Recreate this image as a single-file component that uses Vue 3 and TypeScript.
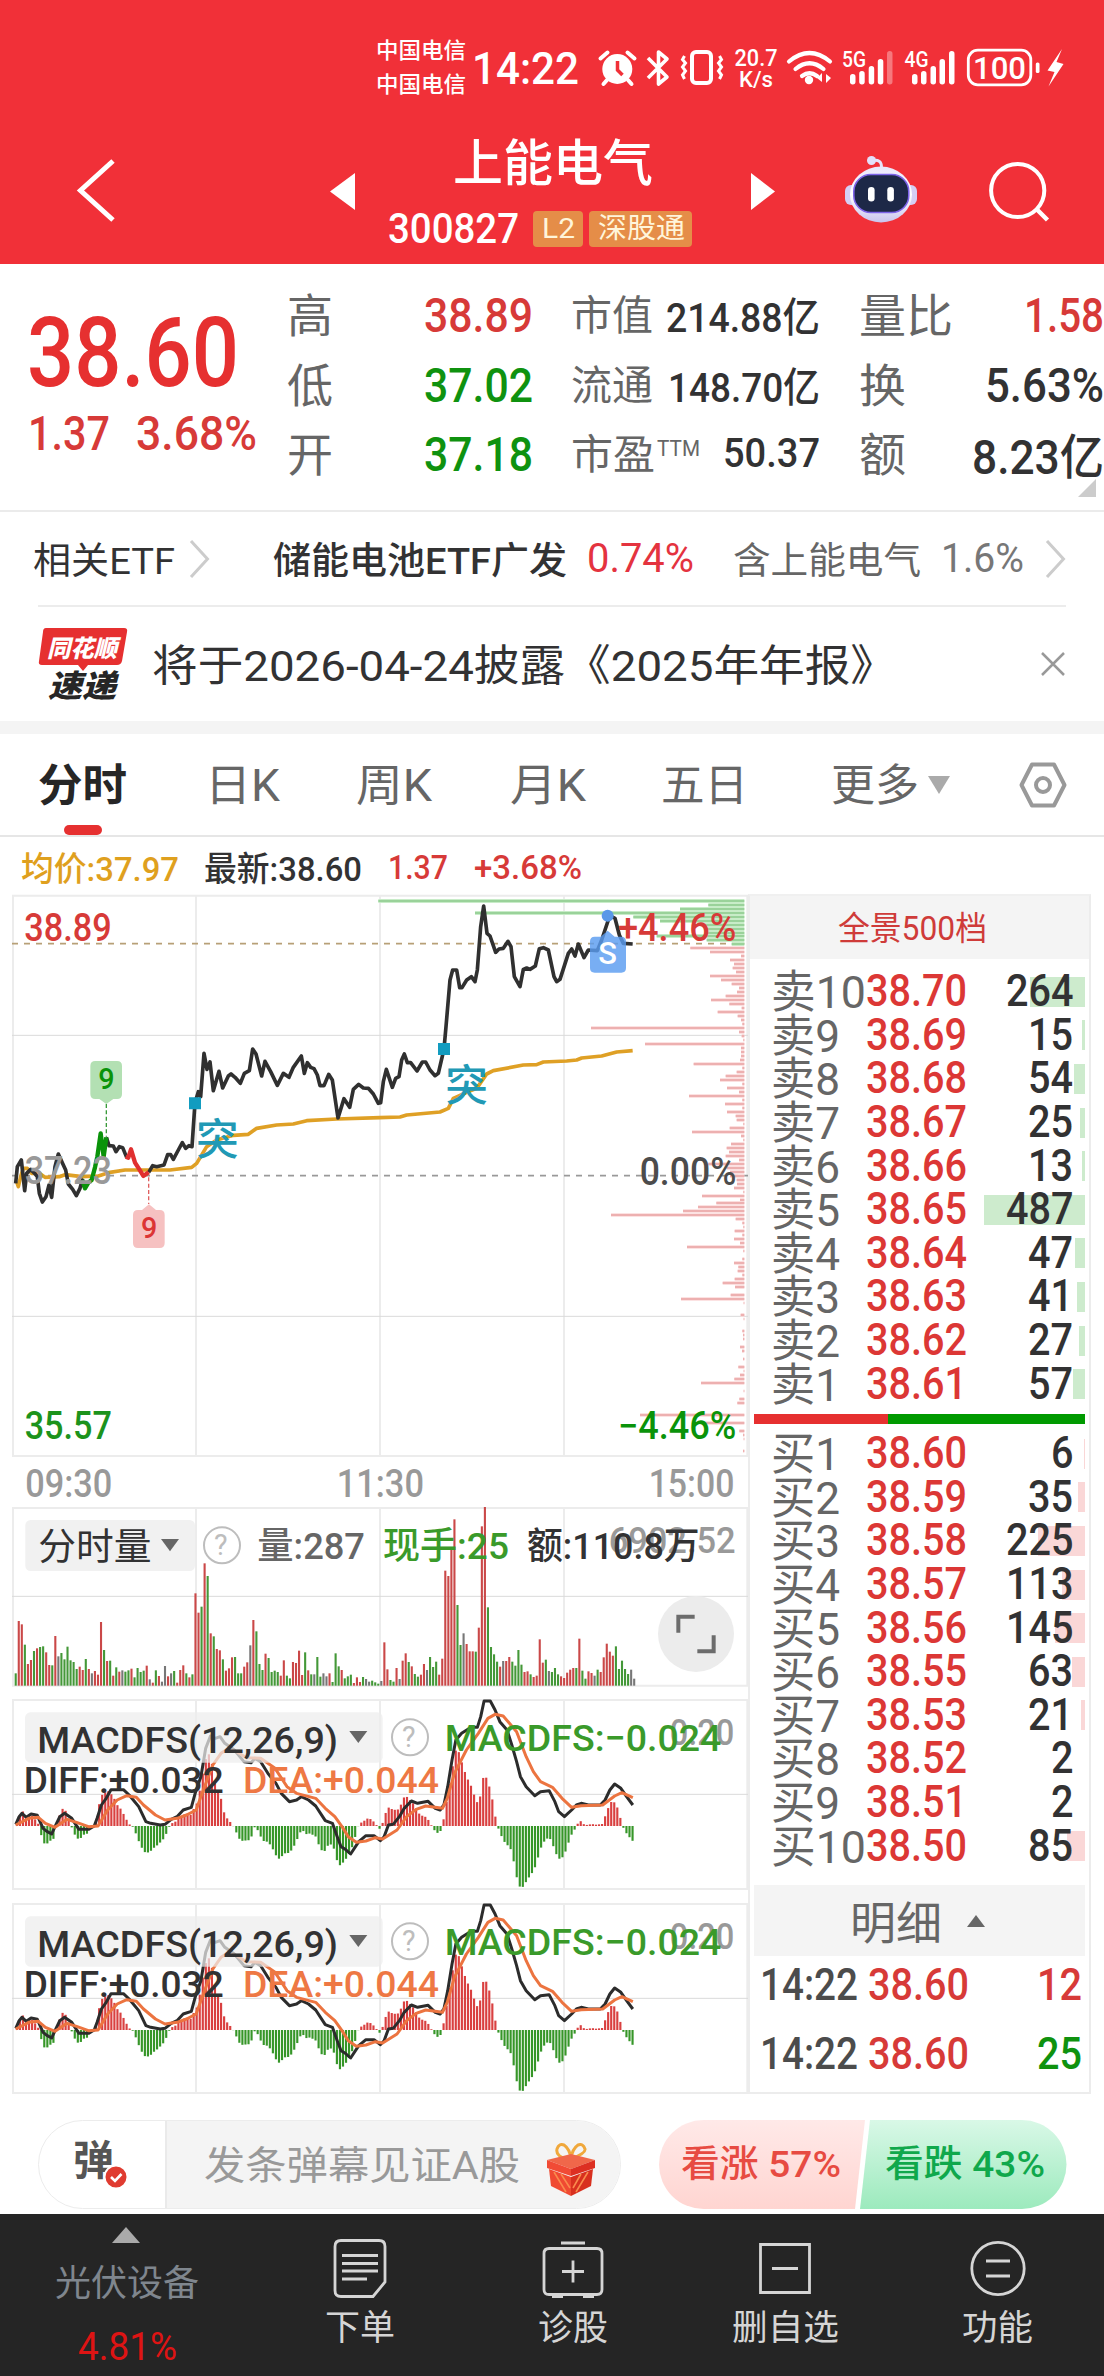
<script setup lang="ts">
interface Bar { x: number; h: number; c: string }

/* Squeezes or stretches a line of text to the given advance width. */
const vFit = {
  mounted(el: HTMLElement, binding: { value: number }) {
    const natural = el.getBoundingClientRect().width
    if (!natural) return
    el.style.transform = `scaleX(${binding.value / natural})`
    el.style.marginRight = `${binding.value - natural}px`
  },
}

const columnA = [
  { k: '高', v: '38.89', c: 'red' },
  { k: '低', v: '37.02', c: 'green' },
  { k: '开', v: '37.18', c: 'green' },
]
const columnB = [
  { k: '市值', kw: 82, sup: '', v: '214.88亿', w: 154 },
  { k: '流通', kw: 82, sup: '', v: '148.70亿', w: 152 },
  { k: '市盈', kw: 84, sup: 'TTM', v: '50.37', w: 97 },
]
const columnC = [
  { k: '量比', kw: 94, v: '1.58', w: 80, c: 'red' },
  { k: '换', kw: 47, v: '5.63%', w: 119, c: 'dark' },
  { k: '额', kw: 47, v: '8.23亿', w: 132, c: 'dark' },
]
const tabs = [
  { t: '日K', w: 75, x: 78 },
  { t: '周K', w: 76, x: 76 },
  { t: '月K', w: 76, x: 78 },
  { t: '五日', w: 87, x: 75 },
  { t: '更多', w: 88, x: 83 },
]

const sells = [264, 15, 54, 25, 13, 487, 47, 41, 27, 57].map((q, i) => ({
  n: `卖${10 - i}`, p: (38.7 - i * 0.01).toFixed(2), q, wide: i === 0,
}))
const buyPrices = ['38.60', '38.59', '38.58', '38.57', '38.56', '38.55', '38.53', '38.52', '38.51', '38.50']
const buys = [6, 35, 225, 113, 145, 63, 21, 2, 2, 85].map((q, i) => ({
  n: `买${i + 1}`, p: buyPrices[i], q, wide: i === 9,
}))
const depthWidth = (q: number) => (q < 4 ? 0 : q * 0.2074)
const qtyWidth = (q: number) => String(q).length * 22.5

/* Chart drawings use three units per pixel. */
const priceA = '47,910 52,860 64,840 74,932 80,880 92,868 104,880 112,890 118,940 127,966 138,950 147,915 155,952 165,860 175,822 190,855 197,870 205,912 218,928 229,947 240,925 247,900 255,925'
const priceGreen = '247,900 255,925 265,908 275,900 285,862 292,830 302,760 311,830 319,772'
const priceB = '319,772 327,797 340,798 348,815 358,800 368,803 380,832'
const priceRed = '377,830 385,833 393,808 405,848 418,868 430,888 446,877'
const priceC = '446,877 458,857 470,860 492,855 503,824 512,824 520,838 535,810 547,788 557,805 567,797 576,800 585,668 595,635 602,650 612,520 621,568 630,546 640,632 657,574 668,624 685,588 693,582 705,592 721,610 733,580 748,572 758,507 768,522 785,588 795,544 812,575 832,616 850,580 867,592 880,562 904,528 913,580 922,548 932,562 942,566 952,585 960,617 972,617 986,583 997,600 1014,714 1032,656 1049,682 1060,628 1076,613 1090,624 1105,625 1120,642 1135,670 1142,668 1150,605 1159,568 1177,622 1187,595 1197,590 1205,540 1213,522 1222,548 1232,548 1251,573 1267,546 1277,546 1290,570 1305,587 1315,580 1332,507 1338,440 1350,300 1358,270 1370,270 1379,323 1386,323 1400,300 1414,290 1425,305 1432,270 1442,140 1451,78 1461,160 1470,168 1487,217 1497,207 1510,205 1524,184 1533,200 1543,290 1560,320 1570,268 1580,264 1590,268 1606,258 1618,206 1630,203 1645,210 1662,290 1670,305 1680,298 1705,220 1715,207 1725,228 1735,192 1752,233 1765,210 1792,212 1805,180 1825,120 1835,110 1845,115 1858,165 1870,190 1898,192'
const average = '50,905 55,920 62,890 70,865 82,865 95,880 118,880 135,892 178,890 195,884 245,890 295,888 330,877 375,870 510,870 575,862 590,850 620,800 650,780 700,766 745,763 770,745 830,735 880,732 920,722 1010,717 1140,713 1200,711 1220,705 1320,696 1345,685 1360,655 1405,635 1430,625 1460,582 1480,572 1570,555 1610,554 1630,546 1700,543 1730,540 1745,534 1805,528 1850,516 1898,512'

const parsePairs = (s: string) => s.split(' ').map(p => p.split(':').map(Number))
const chipsGreen = parsePairs('63:55 75:1045 87:960 99:345 111:820 123:900 135:1035 147:1035 159:1035 168:890 180:1040 192:1115')
const chipsRed = parsePairs('204:991 216:1050 228:1143 240:1110 252:1122 264:1118 276:1128 288:1050 300:1083 312:1115 324:1137 336:1131 348:1097 360:1053 372:1108 384:1145 396:1073 408:1133 420:1143 432:1147 444:693 456:1137 468:1145 480:1150 492:855 504:1143 516:1143 528:1143 540:1140 552:1001 564:1147 576:1130 588:1097 600:1080 612:1147 624:1101 636:1137 648:987 660:1147 672:1095 684:1147 696:1101 708:1127 720:1130 732:1150 744:1109 756:996 768:1143 780:1150 792:1113 804:1100 816:1107 828:1097 840:1137 852:1045 864:1100 876:1110 888:1110 900:1130 912:1131 924:1122 936:1150 948:1026 960:1140 969:1069 981:1014 993:969 1005:753 1017:1127 1029:1147 1041:1150 1053:1124 1065:1147 1077:1122 1089:1140 1101:981 1113:1150 1137:1147 1149:1122 1161:1135 1173:1133 1185:1147 1197:1124 1209:1088 1221:1125 1245:1112 1257:963 1269:1151 1305:1142 1317:1151 1353:1147 1365:1149 1377:1149 1401:1140 1413:1146 1437:1149 1461:1135 1473:1151 1485:1140 1497:1123 1509:1023 1533:1151 1557:1138 1569:1132 1605:840 1629:1030 1653:1138 1665:1149 1677:1151 1713:1149')

const volumeRaw = 'g1210 r1053 r1063 g1124 r1182 r1170 g1143 r1135 g1131 g1129 r1147 r1185 g1186 r1098 k1159 g1149 g1168 g1130 g1171 g1176 g1197 r1190 r1200 g1167 r1197 k1210 r1203 r1214 r1056 g1140 r1173 g1172 r1217 g1192 r1205 k1201 g1205 g1201 r1196 g1222 g1194 g1206 g1202 r1187 k1228 r1238 g1201 r1218 k1235 k1188 r1219 k1210 g1203 r1238 r1200 r1186 g1210 r1222 g1213 r970 r1028 g1010 r880 g918 r1090 g1099 r1137 r1141 g1168 r1202 r1195 r1162 g1161 g1210 g1210 r1190 r1177 k1126 r1050 g1084 g1182 g1200 r1151 g1164 g1206 g1202 g1206 r1217 r1171 g1217 g1225 r1176 r1179 r1142 r1215 g1147 r1201 g1213 k1213 g1161 g1220 k1210 k1219 r1210 g1236 g1150 g1189 r1200 g1225 g1219 g1214 r1239 r1222 r1236 g1221 k1227 k1235 g1232 g1237 g1241 k1233 r1117 r1198 g1230 g1235 r1194 k1227 r1172 r1150 g1176 r1189 g1212 g1220 r1214 r1182 k1200 g1161 g1191 g1175 r1214 r1166 r902 r918 r840 r748 g1005 g1125 k1090 r1122 r1144 r1144 g1145 r1073 r769 r711 g1012 g1131 g1153 g1175 r1190 k1173 r1173 r1161 g1175 g1187 g1140 g1184 r1206 r1204 g1213 r1221 r1217 r1108 r1178 g1169 k1203 g1206 g1194 g1213 r1219 r1224 r1208 r1199 r1194 g1194 r1106 g1202 g1226 r1204 r1209 k1217 g1199 r1206 r1162 r1121 r1145 r1157 g1129 g1197 g1172 g1197 g1212 k1199 k1226'
const volume: Bar[] = volumeRaw.split(' ').map((s, i) => ({ x: 44 + i * 9.14, h: 1247 - Number(s.slice(1)), c: s[0] }))

const histogram = parsePairs('35:8 45:50 52:30 60:32 68:30 75:15 80:5 84:-20 90:-50 96:-57 103:-42 109:-50 115:-15 121:20 128:50 134:54 141:30 147:5 153:-20 160:-36 166:-42 172:-26 180:-26 186:-10 194:-3 200:15 210:92 216:95 223:108 230:98 236:90 243:65 250:55 256:40 262:25 268:5 274:4 280:-10 287:-38 294:-60 300:-78 312:-80 318:-68 325:-62 332:-52 338:-45 345:-30 351:-8 357:8 364:10 370:20 377:25 384:35 392:38 400:32 406:60 412:70 420:130 427:190 433:215 439:215 446:155 452:95 458:110 464:60 470:30 477:18 483:8 489:-5 495:-25 502:-45 524:-42 528:-5 534:-3 541:-20 548:-45 555:-45 562:-52 568:-65 575:-85 580:-98 586:-98 592:-82 600:-82 606:-78 612:-65 618:-50 625:-22 632:-12 638:-25 645:-22 652:-26 658:-28 664:-50 670:-72 678:-75 685:-58 692:-55 698:-70 704:-105 712:-122 718:-105 725:-95 732:-75 738:-55 744:-20 750:8 758:12 764:20 770:24 777:18 784:8 790:-5 796:-12 800:15 808:50 814:58 820:48 834:50 840:75 846:92 852:85 858:75 865:65 872:45 878:32 885:30 892:25 898:10 904:-5 910:-18 916:-22 922:-12 928:30 935:90 941:140 947:190 954:240 960:215 967:180 974:150 980:132 987:112 992:85 999:65 1005:100 1011:160 1018:138 1025:105 1031:62 1037:10 1043:-15 1050:-38 1057:-55 1063:-60 1069:-75 1075:-120 1081:-165 1088:-189 1094:-180 1100:-165 1107:-150 1113:-138 1119:-120 1126:-85 1132:-58 1139:-42 1146:-35 1152:-42 1158:-70 1164:-90 1171:-102 1177:-90 1183:-72 1190:-40 1196:-20 1202:-8 1208:10 1214:15 1220:5 1227:3 1236:6 1245:4 1252:5 1258:6 1264:28 1271:55 1277:72 1283:72 1290:55 1296:25 1302:-4 1309:-22 1316:-35 1322:-45')
function heightAt(x: number): number {
  for (let i = 1; i < histogram.length; i++) {
    const [x0, y0] = histogram[i - 1]
    const [x1, y1] = histogram[i]
    if (x <= x1) return y0 + ((y1 - y0) * Math.max(0, x - x0)) / (x1 - x0)
  }
  return histogram[histogram.length - 1][1]
}
const macdBars = Array.from({ length: 203 }, (_, i) => {
  const x = 33 + i * 6.372
  return { x, h: heightAt(x + 1.5) }
})
const diff = '33,403 40,380 46,370 55,382 65,372 78,376 90,415 98,424 108,432 115,410 125,380 135,370 150,385 165,418 185,418 197,408 203,385 212,345 222,325 232,299 258,299 270,315 290,350 305,395 315,400 335,405 345,403 358,388 370,380 383,360 400,352 408,310 420,260 430,175 440,138 450,145 460,140 470,160 490,180 510,215 525,218 533,205 545,215 560,250 577,280 588,310 605,335 620,330 630,320 645,330 660,348 680,392 695,400 705,440 713,470 722,478 733,492 750,455 765,437 782,437 795,452 803,440 812,405 822,403 835,380 845,355 860,333 873,340 895,334 910,355 920,360 928,345 936,290 945,210 953,150 965,130 985,112 998,112 1005,80 1012,33 1025,33 1035,60 1045,95 1060,120 1070,165 1080,215 1088,260 1100,290 1118,317 1130,305 1148,302 1160,335 1168,365 1180,380 1195,360 1205,345 1215,340 1230,345 1255,345 1265,330 1275,300 1285,282 1298,295 1310,320 1323,345'
const dea = '33,405 60,385 80,382 95,400 115,412 140,388 160,397 185,410 205,408 225,360 245,330 265,317 285,322 300,345 325,375 345,390 370,385 390,375 410,360 425,300 445,225 462,190 475,178 495,185 515,203 545,205 575,235 600,290 620,310 660,325 680,355 700,380 715,410 728,440 745,457 765,453 785,443 800,447 830,420 850,380 870,358 890,348 925,355 935,325 950,250 975,180 1000,130 1020,85 1035,73 1052,78 1080,125 1100,200 1115,245 1130,275 1155,292 1175,325 1195,352 1215,347 1260,345 1285,318 1300,308 1323,323'
</script>

<template>
  <div class="screen">
    <header class="top">
      <div class="status">
        <div class="carriers"><span v-fit="90">中国电信</span><span v-fit="90">中国电信</span></div>
        <span v-fit="107" class="clock">14:22</span>
        <svg class="sys" width="480" height="60" viewBox="590 38 480 60" fill="none">
          <g fill="#fff" stroke="#fff">
            <ellipse cx="616.3" cy="69" rx="15" ry="15" stroke="none" />
            <path d="M599.500 58.500l7-6M633.500 58.500l-7-6M606 80l-3.500 4M627 80l3.500 4" stroke-width="4" stroke-linecap="round" />
            <path d="M616.500 61v9l5 5" fill="none" stroke="#f13038" stroke-width="3.500" />
          </g>
          <path d="M647 58l19 19-8.500 7V52l8.500 7-19 19" stroke="#fff" stroke-width="3.600" stroke-linejoin="round" />
          <rect x="691" y="52" width="19" height="31" rx="4" stroke="#fff" stroke-width="4" />
          <path d="M683.500 56l-2 3.500 3 3.500-3 4 3 4-3 4 2 4M718.500 56l2 3.500-3 3.500 3 4-3 4 3 4-2 4" stroke="#fff" stroke-width="3" />
          <g class="num" fill="#fff">
            <text x="733.500" y="66" font-size="23" textLength="43" lengthAdjust="spacingAndGlyphs">20.7</text>
            <text x="738" y="87" font-size="22.500" textLength="34" lengthAdjust="spacingAndGlyphs">K/s</text>
            <text x="841" y="66.500" font-size="22" textLength="24" lengthAdjust="spacingAndGlyphs">5G</text>
            <text x="903.500" y="66.500" font-size="22" textLength="24" lengthAdjust="spacingAndGlyphs">4G</text>
            <text x="972" y="79" font-size="31.500" textLength="53" lengthAdjust="spacingAndGlyphs">100</text>
          </g>
          <g stroke="#fff" stroke-width="4.200" stroke-linecap="round">
            <path d="M788 61.500q20.500-17 41 0M794.500 69q14-11.500 28 0M801 76q7.500-5.500 15 0" />
          </g>
          <circle cx="808" cy="80" r="4.200" fill="#fff" />
          <path d="M821 73v9l-5-4M825 83v-9l5 4" fill="#fff" />
          <g fill="#fff">
            <rect x="849" y="74" width="5.500" height="10.500" rx="2.700" /><rect x="858.200" y="71" width="5.500" height="13.500" rx="2.700" /><rect x="867.700" y="66" width="5.500" height="18.500" rx="2.700" /><rect x="876.800" y="59" width="5.500" height="25.500" rx="2.700" /><rect x="886" y="51" width="5.500" height="33.500" rx="2.700" opacity=".35" />
            <rect x="911" y="74" width="5.500" height="10.500" rx="2.700" /><rect x="920" y="71" width="5.500" height="13.500" rx="2.700" /><rect x="929.500" y="66" width="5.500" height="18.500" rx="2.700" /><rect x="938.500" y="59" width="5.500" height="25.500" rx="2.700" /><rect x="948" y="51" width="5.500" height="33.500" rx="2.700" />
            <rect x="1034.800" y="62.500" width="3.700" height="10.500" rx="1.600" />
            <path d="M1061 49l-14.500 21.500 7 1.500-6 14.500L1062.500 64l-7-2z" />
          </g>
          <rect x="967.300" y="50.200" width="62.500" height="34.600" rx="9.500" stroke="#fff" stroke-width="2.800" />
        </svg>
      </div>
      <div class="title">
        <svg class="back" width="44" height="70" viewBox="0 0 44 70"><path d="M39 6L6.500 35.500 39 65" fill="none" stroke="#fff" stroke-width="5" /></svg>
        <svg class="prev" width="26" height="38" viewBox="0 0 26 38"><path d="M25 0v37L0 18.500z" fill="#fff" /></svg>
        <div class="name">
          <span v-fit="200" class="stock">上能电气</span>
          <div class="code">
            <span v-fit="131" class="ticker">300827</span>
            <b class="tag l2"><span v-fit="33">L2</span></b>
            <b class="tag sz"><span v-fit="87">深股通</span></b>
          </div>
        </div>
        <svg class="next" width="26" height="38" viewBox="0 0 26 38"><path d="M1 0v37l24-18.500z" fill="#fff" /></svg>
        <svg class="robot" width="76" height="70" viewBox="842 154 76 70">
          <defs>
            <linearGradient id="shell" x1="0" y1="0" x2="0" y2="1"><stop offset="0" stop-color="#e9e6fb" /><stop offset=".5" stop-color="#fff" /><stop offset="1" stop-color="#c9c4ee" /></linearGradient>
          </defs>
          <path d="M870 161q11-3 10.500 7" fill="none" stroke="#e6e2fa" stroke-width="3" />
          <circle cx="870.500" cy="160.500" r="4.500" fill="#e3dffa" />
          <rect x="844" y="185" width="72" height="20" rx="6" fill="#d5cff5" />
          <ellipse cx="880" cy="194.500" rx="31" ry="28" fill="url(#shell)" />
          <rect x="852.800" y="174.500" width="55" height="38" rx="17" fill="#1d2847" stroke="#7d63e8" stroke-width="1.600" />
          <rect x="867" y="187" width="6.600" height="14.500" rx="3.300" fill="#fff" /><rect x="886.300" y="187" width="6.600" height="14.500" rx="3.300" fill="#fff" />
        </svg>
        <svg class="search" width="64" height="64" viewBox="986 160 64 64"><circle cx="1016.700" cy="190.500" r="26.600" fill="none" stroke="#fff" stroke-width="4" /><path d="M1035.500 209l11 11" stroke="#fff" stroke-width="4.500" /></svg>
      </div>
    </header>

    <section class="quote">
      <div class="last">
        <span v-fit="212" class="big">38.60</span>
        <div class="change"><span v-fit="82">1.37</span><span v-fit="121">3.68%</span></div>
      </div>
      <div class="col a">
        <div v-for="r in columnA" :key="r.k" class="kv"><span class="k">{{ r.k }}</span><span v-fit="109" class="v" :class="r.c">{{ r.v }}</span></div>
      </div>
      <div class="col b">
        <div v-for="r in columnB" :key="r.k" class="kv"><span class="k"><span v-fit="r.kw">{{ r.k }}</span><sup v-if="r.sup" v-fit="43">{{ r.sup }}</sup></span><span v-fit="r.w" class="v dark">{{ r.v }}</span></div>
      </div>
      <div class="col c">
        <div v-for="r in columnC" :key="r.k" class="kv"><span v-fit="r.kw" class="k">{{ r.k }}</span><span v-fit="r.w" class="v" :class="r.c">{{ r.v }}</span></div>
      </div>
      <i class="corner"></i>
    </section>

    <section class="etf">
      <span v-fit="142">相关ETF</span>
      <svg class="chev one" width="22" height="40" viewBox="0 0 22 40"><path d="M2 2l16.500 18L2 38" /></svg>
      <span v-fit="294" class="fund">储能电池ETF广发</span>
      <span v-fit="107" class="pct">0.74%</span>
      <span v-fit="188" class="grey">含上能电气</span>
      <span v-fit="83" class="grey weight">1.6%</span>
      <svg class="chev two" width="22" height="40" viewBox="0 0 22 40"><path d="M2 2l16.500 18L2 38" /></svg>
    </section>

    <section class="news">
      <svg class="logo" width="92" height="76" viewBox="38 626 92 76">
        <path d="M46 628h78q4 0 3 4l-5 29q-1 4-5 4H88l-5 6-5-6H42q-4 0-3-4l4-29q0-4 3-4z" fill="#e63030" />
        <text class="brand" x="47" y="657" font-size="24" fill="#fff" textLength="70" lengthAdjust="spacingAndGlyphs">同花顺</text>
        <text class="brand" x="48" y="697" font-size="31" fill="#262626" textLength="68" lengthAdjust="spacingAndGlyphs">速递</text>
      </svg>
      <span v-fit="744" class="headline">将于2026-04-24披露《2025年年报》</span>
      <svg class="close" width="26" height="26" viewBox="0 0 26 26"><path d="M2 2l22 22M24 2L2 24" stroke="#999" stroke-width="2.500" /></svg>
    </section>

    <nav class="tabs">
      <span class="on"><span v-fit="89">分时</span></span>
      <span v-for="t in tabs" :key="t.t" :style="{ paddingLeft: t.x + 'px' }"><span v-fit="t.w">{{ t.t }}</span></span>
      <i class="caret"></i>
      <svg class="gear" width="50" height="50" viewBox="0 0 50 50" fill="none" stroke="#999" stroke-width="4"><path d="M14 4.500h22L46.500 25 36 45.500H14L3.500 25z" stroke-linejoin="round" /><circle cx="25" cy="25" r="7" /></svg>
    </nav>

    <div class="legend">
      <span v-fit="158" class="avg">均价:37.97</span><span v-fit="158" class="now">最新:38.60</span><span v-fit="60" class="red">1.37</span><span v-fit="108" class="red">+3.68%</span>
    </div>

    <main class="market">
      <div class="charts">
        <svg width="748" height="612" viewBox="0 42 2244 1836" fill="none">
          <g stroke="#ececec" stroke-width="6">
            <path d="M39 1728V47H1828M588 47V1728M1140 47V1728M1692 47V1728M2242 47V1728M36 1728H2244M1828 47H2244" />
          </g>
          <path d="M36 466H2244M36 1309H2244" stroke="#dadada" stroke-width="3" />
          <g stroke-width="5" stroke-dasharray="18 18">
            <path d="M36 191H2233" stroke="#b7a077" /><path d="M36 887H2244" stroke="#999" />
          </g>
          <g v-for="c in chipsGreen" :key="'g' + c[0]"><path :d="`M${c[1] + 1080} ${c[0]}H2233`" stroke="#c8ecc8" stroke-width="12" /><path :d="`M${c[1] + 1080} ${c[0]}H2233`" stroke="#9ad29a" stroke-width="6" /></g>
          <g v-for="c in chipsRed" :key="'r' + c[0]"><path :d="`M${c[1] + 1080} ${c[0]}H2233`" stroke="#fbd9d9" stroke-width="11" /><path :d="`M${c[1] + 1080} ${c[0]}H2233`" stroke="#edb0b0" stroke-width="6" /></g>
          <g stroke-width="11" stroke-linejoin="round">
            <polyline :points="average" stroke="#dfa025" />
            <polyline :points="priceA" stroke="#303030" /><polyline :points="priceB" stroke="#303030" /><polyline :points="priceC" stroke="#303030" />
            <polyline :points="priceGreen" stroke="#0a930a" stroke-width="13" /><polyline :points="priceRed" stroke="#e03030" stroke-width="13" />
          </g>
          <g stroke-width="4" stroke-dasharray="12 7"><path d="M319 672V770" stroke="#3a9a3a" /><path d="M446 892V972" stroke="#e06060" /></g>
          <path d="M286 543h65q15 0 15 15v84q0 15-15 15h-11l-21 15-21-15h-12q-15 0-15-15v-84q0-15 15-15z" fill="#b3e0b3" />
          <path d="M414 1104h65q15 0 15-15v-84q0-15-15-15h-11l-21-17-21 17h-12q-15 0-15 15v84q0 15 15 15z" fill="#f6c1c1" />
          <path d="M567 652h36v36h-36zM1314 489h36v36h-36z" fill="#129cc0" />
          <g class="cjk" font-size="128" fill="#2199b5"><text x="588" y="826">突</text><text x="1336" y="664">突</text></g>
          <g class="num" font-size="114">
            <text x="295" y="628" font-size="90" fill="#0a930a" textLength="49" lengthAdjust="spacingAndGlyphs">9</text>
            <text x="423" y="1075" font-size="90" fill="#dc3535" textLength="49" lengthAdjust="spacingAndGlyphs">9</text>
            <text x="73" y="183" fill="#d73a38" textLength="262" lengthAdjust="spacingAndGlyphs">38.89</text>
            <text x="74" y="913" fill="#999" textLength="262" lengthAdjust="spacingAndGlyphs">37.23</text>
            <text x="1919" y="915" fill="#4c4c4c" textLength="290" lengthAdjust="spacingAndGlyphs">0.00%</text>
            <text x="1854" y="183" fill="#d73a38" textLength="355" lengthAdjust="spacingAndGlyphs">+4.46%</text>
            <text x="1854" y="1677" fill="#0a930a" textLength="355" lengthAdjust="spacingAndGlyphs">−4.46%</text>
            <text x="74" y="1677" fill="#1c931c" textLength="262" lengthAdjust="spacingAndGlyphs">35.57</text>
            <g fill="#999">
              <text x="76" y="1852" textLength="261" lengthAdjust="spacingAndGlyphs">09:30</text>
              <text x="1010" y="1852" textLength="262" lengthAdjust="spacingAndGlyphs">11:30</text>
              <text x="1946" y="1852" textLength="257" lengthAdjust="spacingAndGlyphs">15:00</text>
            </g>
          </g>
          <circle cx="1823" cy="107" r="18" fill="#5a98e8" />
          <path d="M1782 170h20l21-18 21 18h20q14 0 14 14v80q0 14-14 14h-80q-14 0-14-14v-80q0-14 14-14z" fill="#5a9cf0" opacity=".82" />
          <text class="num" x="1795" y="252" font-size="92" fill="#fff" textLength="56" lengthAdjust="spacingAndGlyphs">S</text>
        </svg>

        <svg class="vol" width="748" height="182" viewBox="0 708 2244 546" fill="none">
          <path d="M39 1247V714H2242V1247M588 714V1247M1140 714V1247M1692 714V1247M36 1247H2244" stroke="#ececec" stroke-width="6" />
          <path d="M36 979H2244" stroke="#dadada" stroke-width="3" />
          <rect x="76" y="750" width="509" height="153" rx="16" fill="#f1f1f1" />
          <circle cx="2088" cy="1092" r="114" fill="#ececec" />
          <path d="M2035 1088V1040H2084M2141 1096V1144H2092" stroke="#6c6c6c" stroke-width="12" />
          <rect v-for="(b, i) in volume" :key="i" :class="'v-' + b.c" :x="b.x" :y="1247 - b.h" width="6.300" :height="b.h" />
          <path d="M483 807h54l-27 37z" fill="#666" />
          <circle cx="666" cy="826" r="54" stroke="#bdbdbd" stroke-width="6" />
          <g class="num thin">
            <text x="642" y="856" font-size="86" fill="#bdbdbd">?</text>
            <text x="115" y="870" font-size="112" fill="#323233" textLength="340" lengthAdjust="spacingAndGlyphs">分时量</text>
          </g>
          <g class="num" font-size="112">
            <text x="1826" y="848" fill="#999" textLength="381" lengthAdjust="spacingAndGlyphs">6902.52</text>
            <text x="772" y="866" fill="#666" textLength="323" lengthAdjust="spacingAndGlyphs">量:287</text>
            <text x="1149" y="866" fill="#3a9a2a" textLength="378" lengthAdjust="spacingAndGlyphs">现手:25</text>
            <text x="1581" y="866" fill="#323233" textLength="518" lengthAdjust="spacingAndGlyphs">额:110.8万</text>
          </g>
        </svg>

        <svg v-for="n in 2" :key="n" class="macd" width="748" height="192" viewBox="0 27 2244 576" fill="none">
          <path d="M39 597V30H2242V597M588 30V597M1140 30V597M1692 30V597M36 597H2244" stroke="#ececec" stroke-width="6" />
          <path d="M36 313H2244" stroke="#dadada" stroke-width="3" />
          <g transform="scale(1.435 1)">
            <rect v-for="(b, i) in macdBars" :key="i" :x="b.x" :y="b.h > 0 ? 408 - b.h : 408" width="4.500" :height="Math.abs(b.h)" :fill="b.h > 0 ? '#d94040' : '#369628'" />
            <polyline class="line" :points="diff" stroke="#2c2c2c" />
            <polyline class="line" :points="dea" stroke="#ec7440" />
          </g>
          <rect x="75" y="67" width="1073" height="151" rx="16" fill="#ededed" opacity=".72" />
          <path d="M1048 123h54l-27 36z" fill="#666" />
          <circle cx="1230" cy="142" r="54" stroke="#bdbdbd" stroke-width="6" />
          <text class="num thin" x="1206" y="172" font-size="86" fill="#bdbdbd">?</text>
          <g class="num" font-size="113">
            <text x="2009" y="164" fill="#999" textLength="194" lengthAdjust="spacingAndGlyphs">0.20</text>
            <text x="112" y="188" fill="#323233" textLength="902" lengthAdjust="spacingAndGlyphs">MACDFS(12,26,9)</text>
            <text x="1334" y="183" fill="#3a9a2a" textLength="830" lengthAdjust="spacingAndGlyphs">MACDFS:−0.024</text>
            <text x="71" y="308" fill="#323233" textLength="600" lengthAdjust="spacingAndGlyphs">DIFF:+0.032</text>
            <text x="729" y="308" fill="#ee7844" textLength="588" lengthAdjust="spacingAndGlyphs">DEA:+0.044</text>
          </g>
        </svg>
      </div>

      <aside class="book">
        <div class="bookhead"><span v-fit="149">全景500档</span></div>
        <div class="levels sell">
          <div v-for="r in sells" :key="r.n" class="level">
            <span class="n"><span v-fit="r.wide ? 95 : 69">{{ r.n }}</span></span><span v-fit="101" class="p">{{ r.p }}</span>
            <span class="q"><i :style="{ width: depthWidth(r.q) + 'px' }"></i><b v-fit="qtyWidth(r.q)">{{ r.q }}</b></span>
          </div>
        </div>
        <div class="ratio"><i></i></div>
        <div class="levels buy">
          <div v-for="r in buys" :key="r.n" class="level">
            <span class="n"><span v-fit="r.wide ? 95 : 69">{{ r.n }}</span></span><span v-fit="101" class="p">{{ r.p }}</span>
            <span class="q"><i :style="{ width: depthWidth(r.q) + 'px' }"></i><b v-fit="qtyWidth(r.q)">{{ r.q }}</b></span>
          </div>
        </div>
        <div class="detail"><span v-fit="92">明细</span><i></i></div>
        <div class="trade"><span v-fit="98">14:22</span><span v-fit="101" class="red">38.60</span><span v-fit="45" class="red amt">12</span></div>
        <div class="trade"><span v-fit="98">14:22</span><span v-fit="101" class="red">38.60</span><span v-fit="45" class="green amt">25</span></div>
      </aside>
    </main>

    <section class="social">
      <div class="danmu">
        <div class="toggle"><b>弹</b><svg width="26" height="26" viewBox="0 0 26 26"><circle cx="13" cy="13" r="11.500" fill="#e03c31" stroke="#fff" stroke-width="2" /><path d="M8 13l4 4 6.500-7" fill="none" stroke="#fff" stroke-width="2.600" /></svg></div>
        <div class="input">
          <span v-fit="316">发条弹幕见证A股</span>
          <svg width="50" height="54" viewBox="0 0 50 54">
            <path d="M25 16C13 16 10 10 11 6q2-6 7-4 6 4 7 14 1-10 7-14 5-2 7 4 1 4-14 10z" fill="none" stroke="#f0a83c" stroke-width="3" />
            <path d="M1 17l24-6 24 6-24 9z" fill="#f0674a" /><path d="M1 17l24 9v7L1 25z" fill="#f14b35" /><path d="M49 17l-24 9v7l24-8z" fill="#dd2f22" />
            <path d="M3 26l22 8v19L5 43z" fill="#f04a32" /><path d="M47 26l-22 8v19l20-10z" fill="#d8301f" />
            <path d="M8 29l12 20M15 31l9 14M42 29L30 49M35 31l-8 14" stroke="#f98a4c" stroke-width="1.600" />
          </svg>
        </div>
      </div>
      <div class="poll">
        <svg width="408" height="89" viewBox="0 0 408 89">
          <defs>
            <linearGradient id="up" x1="0" y1="0" x2="0" y2="1"><stop offset="0" stop-color="#ffe9e8" /><stop offset="1" stop-color="#ffd5d1" /></linearGradient>
            <linearGradient id="down" x1="0" y1="0" x2="0" y2="1"><stop offset="0" stop-color="#d9f8e7" /><stop offset="1" stop-color="#9ceabd" /></linearGradient>
          </defs>
          <path d="M44.500 0H206l-10 89H44.500a44.500 44.500 0 0 1 0-89z" fill="url(#up)" />
          <path d="M211 0H363a44.500 44.500 0 0 1 0 89H201z" fill="url(#down)" />
          <g class="num" font-size="37"><text x="22" y="57" fill="#e74b42" textLength="160" lengthAdjust="spacingAndGlyphs">看涨 57%</text><text x="226" y="57" fill="#10a84c" textLength="160" lengthAdjust="spacingAndGlyphs">看跌 43%</text></g>
        </svg>
      </div>
    </section>

    <footer class="dock">
      <div class="sector"><i></i><span v-fit="144">光伏设备</span><b v-fit="99">4.81%</b></div>
      <div class="item">
        <svg width="66" height="62" viewBox="0 0 66 62"><path d="M14 3.500h38q6 0 6 6V45L46 59.500H14q-6 0-6-6v-44q0-6 6-6zM15 18.500h36M15 26.500h36M15 34h36M15 42h25" /></svg>
        <span v-fit="70">下单</span>
      </div>
      <div class="item">
        <svg width="66" height="62" viewBox="0 0 66 62"><path d="M9 11.500h48q5 0 5 5v36q0 5-5 5H9q-5 0-5-5v-36q0-5 5-5zM21 6h24M22 34.500h22M33 23.500v22M12 59.500h11M43 59.500h11" /></svg>
        <span v-fit="70">诊股</span>
      </div>
      <div class="item">
        <svg width="66" height="62" viewBox="0 0 66 62"><path d="M8.500 7.500h49v48h-49zM20 31.500h26" /></svg>
        <span v-fit="107">删自选</span>
      </div>
      <div class="item">
        <svg width="66" height="62" viewBox="0 0 66 62"><circle cx="33" cy="31.500" r="26.200" /><path d="M21 24h24M21 39h24" /></svg>
        <span v-fit="71">功能</span>
      </div>
    </footer>
  </div>
</template>

<style>
body { background: #fff; }
</style>

<style scoped>
.screen { width: 1104px; height: 2376px; overflow: hidden; background: #fff; color: #323233; font-family: Roboto, "Noto Sans CJK SC", sans-serif; display: flex; flex-direction: column; }
.screen * { box-sizing: border-box; }
.screen span, .screen b, .screen sup { white-space: nowrap; flex-shrink: 0; transform-origin: left center; }
.carriers span, .tag span, .n span, .clock, .stock, .ticker, .big, .change span { display: block; width: max-content; }
svg { display: block; flex-shrink: 0; }
.red { color: #d73a38; }
.green { color: #0f920f; }
.dark { color: #323233; }
.num { font-family: Roboto, "Noto Sans CJK SC", sans-serif; font-weight: 500; }
.thin { font-weight: 400; }
.cjk { font-family: "Noto Sans CJK SC", sans-serif; font-weight: 500; }

.top { height: 264px; background: #f13038; color: #fff; }
.status { height: 100px; padding: 34px 0 0 376px; display: flex; align-items: flex-start; }
.carriers { width: 96px; font-size: 22px; line-height: 34px; font-weight: 500; }
.clock { font-size: 45px; line-height: 70px; font-weight: 500; }
.sys { margin: 4px 0 0 12px; }
.title { height: 164px; display: flex; align-items: flex-start; padding: 0 0 0 74px; }
.back { margin-top: 55px; }
.prev { margin: 73px 0 0 212px; }
.name { width: 330px; margin: 33px 0 0 31px; display: flex; flex-direction: column; }
.stock { font-size: 50px; line-height: 62px; font-weight: 500; margin-left: 66px; }
.code { display: flex; align-items: center; height: 68px; }
.ticker { font-size: 42px; line-height: 50px; font-weight: 500; margin-left: 1px; }
.screen .tag { background: #e58d48; color: #fff5da; height: 36px; border-radius: 4px; font-size: 28px; line-height: 35px; font-weight: 400; display: block; }
.l2 { width: 50px; margin-left: 14px; padding-left: 9px; }
.sz { width: 103px; margin-left: 6px; padding-left: 9px; }
.next { margin: 73px 0 0 33px; }
.robot { margin: 54px 0 0 67px; }
.search { margin: 60px 0 0 68px; }

.quote { height: 248px; border-bottom: 2px solid #ebebeb; display: flex; position: relative; padding-left: 26px; }
.last { width: 262px; padding-top: 48px; }
.big { font-size: 96px; line-height: 82px; font-weight: 500; color: #e63030; margin-left: 1px; }
.change { display: flex; font-size: 48px; line-height: 56px; font-weight: 500; color: #d73a38; gap: 26px; padding: 12px 0 0 2px; }
.col { padding-top: 17px; }
.kv { height: 69.500px; display: flex; align-items: center; justify-content: space-between; }
.k { color: #666; font-size: 46px; display: block; padding-bottom: 7px; }
.v { font-weight: 500; font-size: 48px; display: block; }
.a { width: 246px; margin-left: -1px; }
.b { width: 249px; margin-left: 38px; }
.b .k { font-size: 41px; display: flex; }
.b .k span { display: block; }
.b .v { font-size: 41px; padding-bottom: 3px; }
.b sup { font-size: 22px; line-height: 24px; margin: 16px 0 0 2px; display: block; }
.c { width: 245px; margin-left: 39px; }
.c .kv:last-child .v { padding-bottom: 4px; }
.corner { position: absolute; left: 1078px; top: 215px; border-left: 18px solid transparent; border-bottom: 18px solid #ccc; }

.etf { height: 95px; margin-left: 38px; width: 1028px; border-bottom: 2px solid #ececec; display: flex; align-items: center; font-size: 37px; }
.etf span { display: block; margin-left: -5px; padding-bottom: 2px; }
.chev path { fill: none; stroke: #ccc; stroke-width: 3; }
.one { margin-left: 14px; }
.etf .fund { font-weight: 500; margin-left: 62px; }
.etf .pct { color: #e4333f; font-size: 41px; margin-left: 20px; }
.etf .grey { color: #666; margin-left: 39px; }
.etf .weight { font-size: 41px; margin-left: 20px; color: #777; }
.two { margin-left: 21px; }

.news { height: 127px; border-bottom: 13px solid #f4f4f4; padding: 0 38px 0 38px; display: flex; align-items: center; }
.brand { font-family: "Noto Sans CJK SC", sans-serif; font-weight: 900; font-style: italic; }
.headline { font-size: 43px; margin-left: 22px; display: block; padding-bottom: 5px; }
.close { margin-left: auto; }

.tabs { height: 103px; border-bottom: 2px solid #e6e6e6; display: flex; align-items: center; padding-left: 38px; font-size: 44px; color: #666; }
.tabs > span > span { display: block; padding-bottom: 5px; }
.tabs .on { color: #262626; font-weight: 700; position: relative; }
.on::after { content: ""; position: absolute; left: 26px; top: 75px; width: 38px; height: 10px; border-radius: 5px; background: #e63030; }
.caret { border: 11px solid transparent; border-top: 18px solid #aaa; border-bottom: 0; margin-left: 9px; }
.gear { margin-left: 68px; }

.legend { height: 57px; padding: 2px 0 0 21px; display: flex; align-items: center; font-size: 34px; font-weight: 500; }
.legend span { display: block; }
.avg { color: #dfa01e; }
.now { margin-left: 25px; }
.legend .red { margin-left: 26px; }

.market { display: flex; height: 1200px; }
.charts { width: 748px; display: flex; flex-direction: column; }
.v-r { fill: #ca4848; }
.v-g { fill: #449838; }
.v-k { fill: #777; }
.macd { margin-top: 11px; overflow: visible; }
.macd + .macd { margin-top: 12px; }
.line { stroke-width: 3px; vector-effect: non-scaling-stroke; stroke-linejoin: round; }

.book { width: 343px; height: 1200px; border: 2px solid #ececec; border-top-color: #f0f0f0; }
.bookhead { height: 63px; background: #f4f4f4; color: #cf3b39; font-size: 33px; display: flex; align-items: center; padding: 0 0 4px 88px; }
.levels { height: 436px; }
.sell { margin-top: 10px; }
.level { height: 43.600px; display: flex; align-items: center; padding: 0 4px 0 21px; }
.level span, .level b { display: block; }
.n { width: 95px; font-size: 45px; color: #666; padding-bottom: 4px; }
.p { font-size: 45px; font-weight: 500; color: #dc3735; }
.screen .level .q { margin-left: auto; width: 118px; height: 32px; position: relative; display: flex; justify-content: flex-end; align-items: center; padding-right: 12px; }
.q i { position: absolute; right: 0; top: 2px; height: 30px; background: #cdebcd; }
.buy .q i { background: #fad7d7; }
.q b { position: relative; font-size: 45px; font-weight: 500; }
.ratio { height: 10px; margin: 9px 4px 7px; background: #009a00; }
.ratio i { display: block; width: 134px; height: 10px; background: #e63030; }
.detail { height: 71px; margin: 18px 4px 0; background: #f4f4f4; color: #666; font-size: 45px; display: flex; align-items: center; padding-left: 96px; }
.detail i { border: 9px solid transparent; border-top: 0; border-bottom: 12px solid #666; margin-left: 25px; }
.detail span, .trade span { display: block; }
.trade { height: 69.500px; display: flex; align-items: center; padding: 0 7px 12px 10px; font-size: 44px; font-weight: 500; color: #4c4c4c; }
.trade .red { margin-left: 10px; }
.trade .amt { margin-left: auto; }

.social { height: 120px; padding: 26px 0 0 38px; display: flex; }
.danmu { width: 583px; height: 89px; border-radius: 45px; overflow: hidden; border: 1.500px solid #ececec; display: flex; }
.toggle { width: 128px; border-right: 2px solid #eaeaea; position: relative; padding-left: 34px; font-size: 41px; line-height: 80px; color: #555; }
.toggle svg { position: absolute; left: 64px; top: 43px; }
.input { flex: 1; background: #f4f4f4; display: flex; align-items: center; color: #999; font-size: 39px; padding-left: 37px; }
.input span { display: block; padding-bottom: 5px; }
.input svg { margin: 10px 0 0 26px; }
.poll { margin-left: 38px; }

.dock { height: 162px; background: #252525; color: #d5d5d5; display: flex; font-size: 35px; }
.sector { width: 254px; display: flex; flex-direction: column; align-items: flex-start; color: #7f868e; }
.sector i { border: 14px solid transparent; border-top: 0; border-bottom: 16px solid #aaa; margin: 13px 0 0 112px; }
.sector span { font-size: 36px; line-height: 44px; margin: 19px 0 0 55px; }
.sector b { font-size: 38px; line-height: 44px; font-weight: 400; color: #de1414; margin: 19px 0 0 78px; }
.item { width: 212.500px; display: flex; flex-direction: column; align-items: center; padding-top: 23px; }
.item svg { fill: none; stroke: #d5d5d5; stroke-width: 2.800; }
.item span { display: block; line-height: 44px; margin-top: 8px; }
</style>
